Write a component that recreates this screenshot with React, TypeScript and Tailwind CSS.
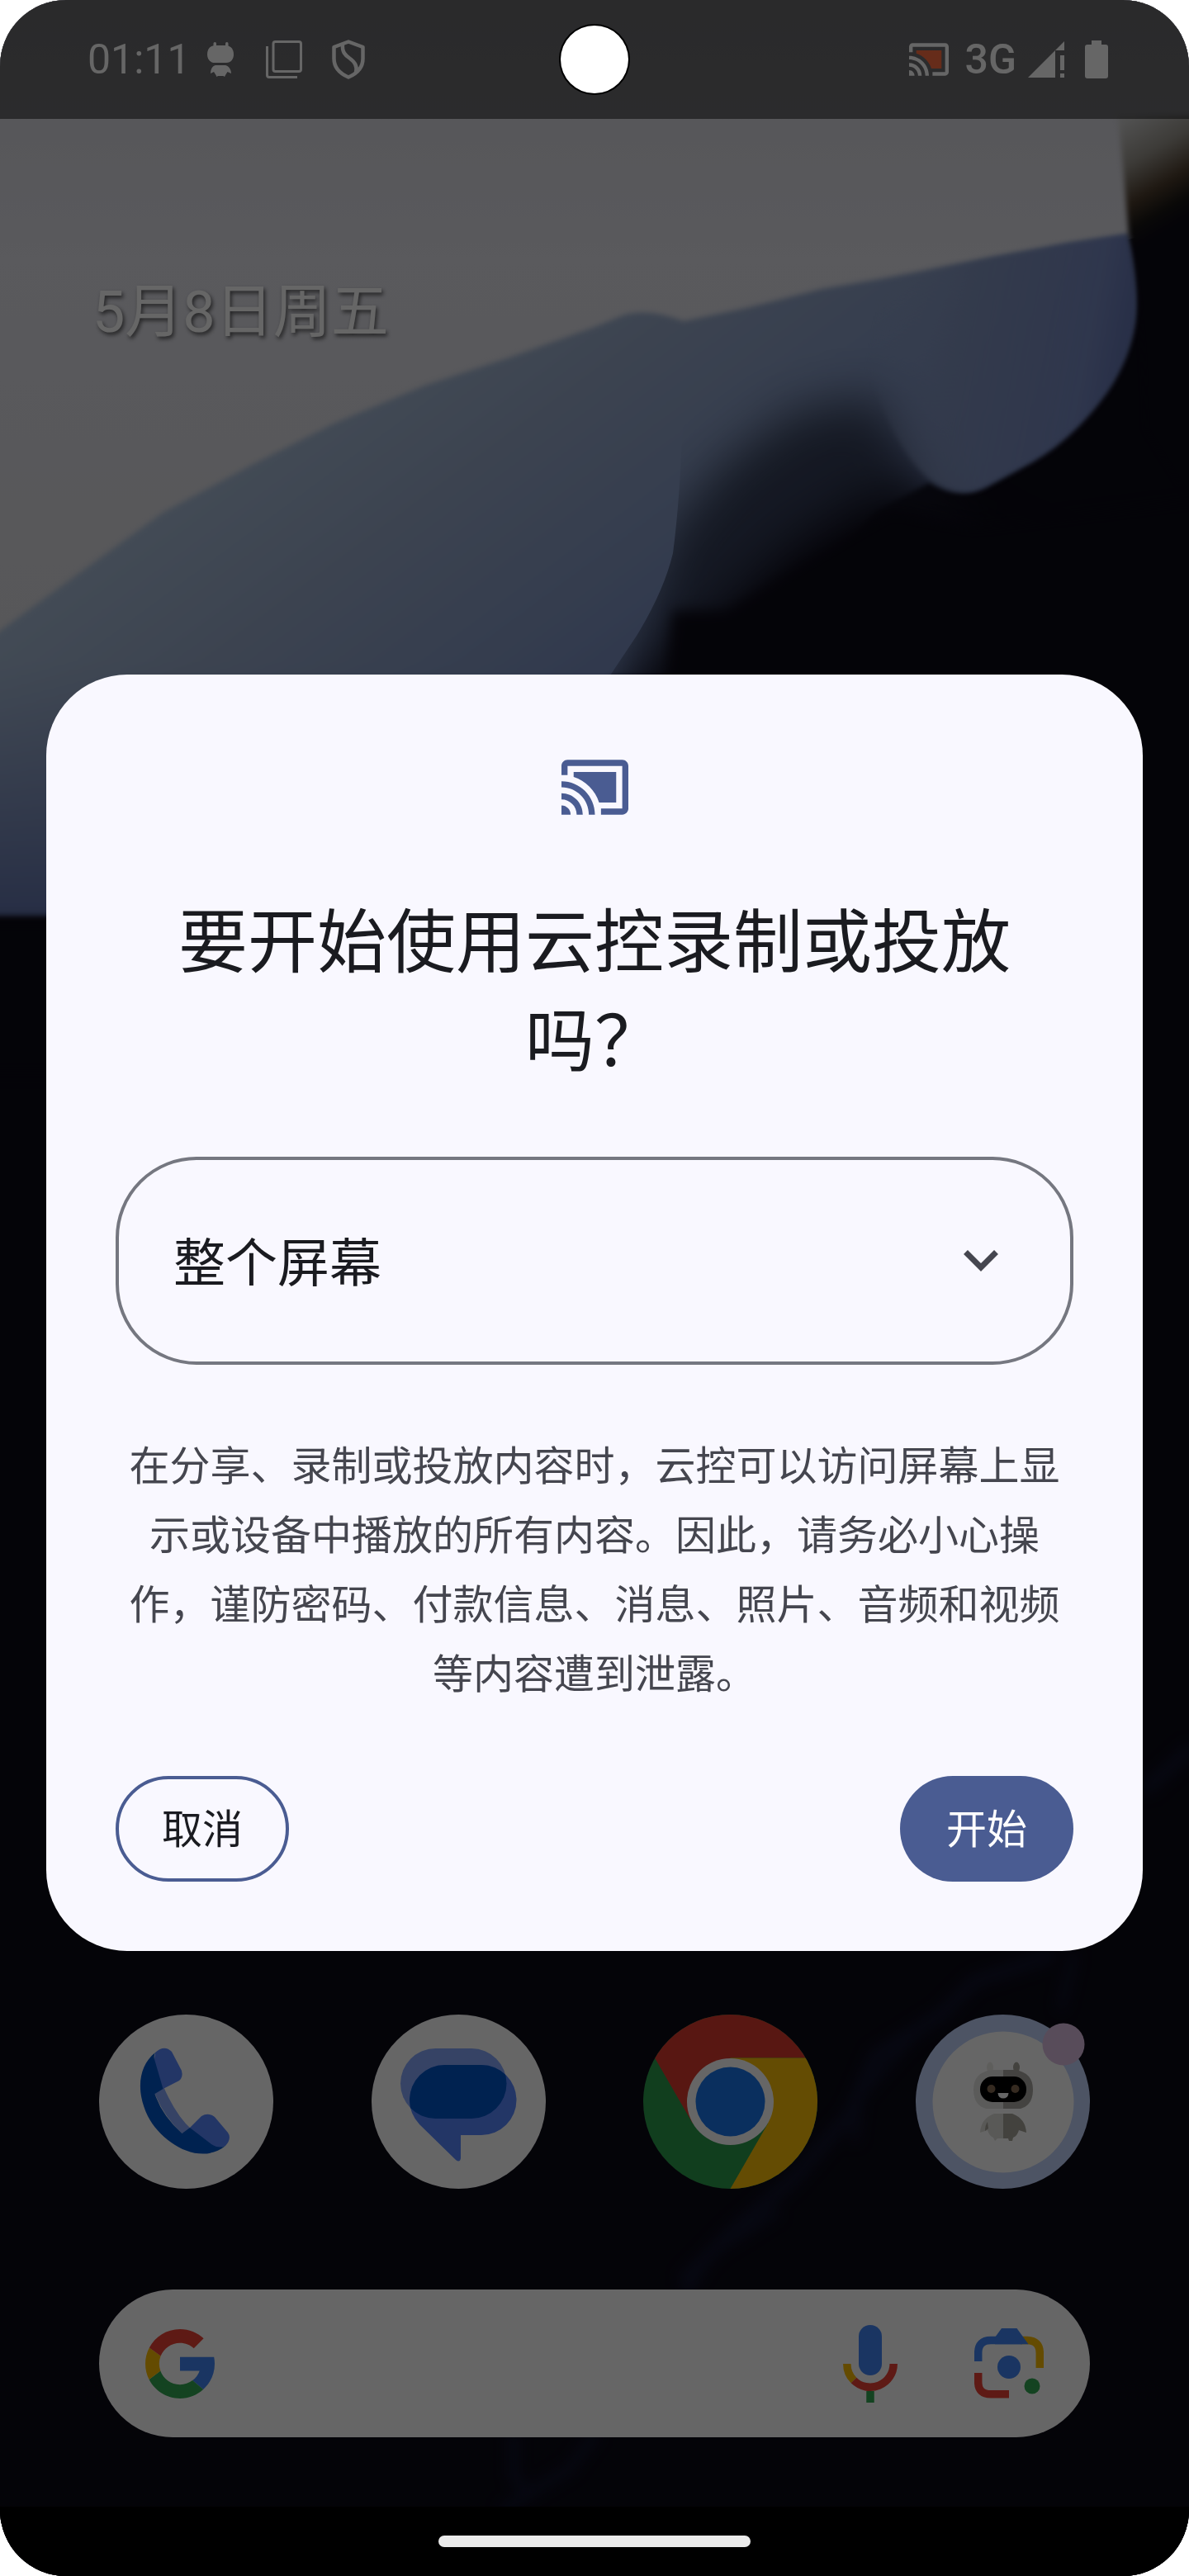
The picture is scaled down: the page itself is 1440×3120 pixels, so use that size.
import { useState } from "react";

const Wallpaper = () => {
  return (
    <svg
      className="absolute inset-0 h-full w-full"
      viewBox="0 0 1440 3120"
      preserveAspectRatio="none"
      aria-hidden="true"
    >
      <defs>
        <linearGradient id="paper" x1="0" y1="0" x2="0" y2="1">
          <stop offset="0" stopColor="#d3d3da" />
          <stop offset="0.35" stopColor="#e0e0e8" />
          <stop offset="1" stopColor="#d8d8dc" />
        </linearGradient>
        <linearGradient id="petal" gradientUnits="userSpaceOnUse" x1="420" y1="440" x2="760" y2="900">
          <stop offset="0" stopColor="#a8bcd6" />
          <stop offset="0.35" stopColor="#96a8c8" />
          <stop offset="0.7" stopColor="#8398c4" />
          <stop offset="1" stopColor="#7084bc" />
        </linearGradient>
        <linearGradient id="petalRight" gradientUnits="userSpaceOnUse" x1="1050" y1="440" x2="1370" y2="500">
          <stop offset="0" stopColor="#8ea0c8" stopOpacity="0" />
          <stop offset="0.35" stopColor="#8092bc" stopOpacity="0.85" />
          <stop offset="0.8" stopColor="#7688c0" />
          <stop offset="1" stopColor="#5c6eac" />
        </linearGradient>
        <linearGradient id="petalLow" gradientUnits="userSpaceOnUse" x1="0" y1="800" x2="0" y2="1110">
          <stop offset="0" stopColor="#7c90be" stopOpacity="0" />
          <stop offset="1" stopColor="#6274ac" />
        </linearGradient>
        <linearGradient id="edge" gradientUnits="userSpaceOnUse" x1="1355" y1="150" x2="1425" y2="270">
          <stop offset="0" stopColor="#cacaca" />
          <stop offset="0.35" stopColor="#98948c" />
          <stop offset="0.65" stopColor="#4c3c2c" />
          <stop offset="0.85" stopColor="#181614" />
          <stop offset="1" stopColor="#0c0a16" />
        </linearGradient>
        <clipPath id="foldArea">
          <path d="M828 300Q832 540 815 670Q804 716 771 770L735 824H1440V300Z" />
        </clipPath>
        <filter id="soft2" x="-10%" y="-10%" width="120%" height="120%" colorInterpolationFilters="sRGB">
          <feGaussianBlur stdDeviation="3" />
        </filter>
        <filter id="soft8" x="-20%" y="-20%" width="140%" height="140%" colorInterpolationFilters="sRGB">
          <feGaussianBlur stdDeviation="8" />
        </filter>
        <filter id="soft30" x="-40%" y="-40%" width="180%" height="180%" colorInterpolationFilters="sRGB">
          <feGaussianBlur stdDeviation="30" />
        </filter>
      </defs>

      <rect width="1440" height="3120" fill="#0c0a16" />
      <path d="M0 0H1440V270L1367 290L720 500L0 900Z" fill="url(#paper)" />

      {/* Blue petal */}
      <g filter="url(#soft2)">
        <path
          d="M-20 780L0 764L92 697L197 621L303 564L404 513L514 467L620 432L720 396L747 385Q780 370 828 389L904 373L995 350L1110 330L1202 312L1294 295L1367 284Q1380 330 1375 380Q1370 430 1340 474Q1300 530 1249 559L1194 589Q1162 606 1125 585L1060 620L940 760L860 820H739L600 1110H-20Z"
          fill="url(#petal)"
        />
        <path d="M-20 800H745L600 1110H-20Z" fill="url(#petalLow)" />
      </g>
      <path d="M-40 1116H700V1300H-40Z" fill="#0c0a16" filter="url(#soft8)" />

      {/* Dark fold under the petal */}
      <g clipPath="url(#foldArea)">
        <path
          d="M1160 640L1110 560L1060 480L960 500L880 560L810 640L740 900H1160Z"
          fill="#1c2234"
          opacity="0.75"
          filter="url(#soft30)"
        />
        <path
          d="M1200 660L1110 600L1060 598L960 660L890 730L830 780L700 900H1400L1300 700Z"
          fill="#0c0a16"
          filter="url(#soft30)"
        />
        <path d="M815 740L800 900H1500V600L1180 640L1080 620L960 690L880 740Z" fill="#0c0a16" filter="url(#soft8)" />
      </g>

      {/* Lit tip on the right */}
      <path
        d="M1040 344L1110 330L1202 312L1294 295L1367 284Q1380 330 1375 380Q1370 430 1340 474Q1300 530 1249 559L1194 589Q1162 606 1125 580Q1080 540 1050 440Z"
        fill="url(#petalRight)"
        filter="url(#soft2)"
      />

      {/* Burnt right edge */}
      <path d="M1354 140H1450V620L1388 520Q1384 360 1367 284L1360 200Z" fill="url(#edge)" filter="url(#soft2)" />

      {/* Faint veins at the bottom */}
      <g fill="none" stroke="#11152e" strokeLinecap="round" strokeLinejoin="round" filter="url(#soft8)">
        <path d="M1440 2120L1390 2165M1270 2370L1180 2400L1140 2440L1060 2490L1030 2560L960 2640L890 2700L830 2760" strokeWidth="16" />
        <path d="M1300 2370L1285 2430M1120 2450L1040 2540L1035 2590M940 2680L860 2730L830 2780" strokeWidth="10" />
        <path d="M622 2950V3000L640 3020L690 2990L720 2950M640 3020L610 3040" strokeWidth="12" />
      </g>
    </svg>
  );
};

const CastIcon = ({ className, fill }: { className: string; fill: string }) => {
  return (
    <svg className={className} viewBox="0 0 22 18" fill="currentColor" aria-hidden="true">
      <path d="M20 0H2C0.900 0 0 0.900 0 2V5H2V2H20V16H13V18H20C21.100 18 22 17.100 22 16V2C22 0.900 21.100 0 20 0Z" />
      <path d="M0 15V18H3C3 16.340 1.660 15 0 15Z" />
      <path d="M0 11V13C2.760 13 5 15.240 5 18H7C7 14.130 3.870 11 0 11Z" />
      <path d="M0 7V9C4.970 9 9 13.030 9 18H11C11 11.920 6.070 7 0 7Z" />
      <path d="M4 4V5.630C7.960 6.910 11.090 10.040 12.370 14H18V4Z" fill={fill} />
    </svg>
  );
};

const StatusBar = () => {
  return (
    <header className="relative flex h-36 items-center justify-between bg-black/50 pr-[98px] pl-[106px] text-white">
      <div className="flex items-center">
        <span className="text-[50px]">01:11</span>
        <svg className="ml-5 h-[42px] w-8" viewBox="0 0 32 42" fill="currentColor" aria-hidden="true">
          <rect x="7.500" y="0" width="3.500" height="9" rx="1.700" />
          <rect x="22" y="0" width="3.500" height="9" rx="1.700" />
          <path d="M10 4H22C29 4 32 9 32 15C32 20 29 25 23 25H9C3 25 0 20 0 15C0 9 3 4 10 4Z" />
          <path d="M10 28H22C26 29 29 33 29 38L24.500 36L22 40L21 42L19.500 41H13L11.500 42L10.500 40L8 36L4 38C4 33 6 29 10 28Z" />
        </svg>
        <svg className="ml-[39px] h-[46px] w-11" viewBox="0 0 44 46" fill="none" stroke="currentColor" strokeWidth="3" aria-hidden="true">
          <rect x="9" y="1.500" width="33.500" height="36" rx="2.500" />
          <path d="M1.500 7V42Q1.500 44.500 4 44.500H38" />
        </svg>
        <svg className="ml-9 h-12 w-10" viewBox="0 0 40 48" fill="none" stroke="currentColor" strokeWidth="4.500" strokeLinejoin="round" aria-hidden="true">
          <path d="M20 2.500L37.500 9V23Q37.500 38 20 45.500Q2.500 38 2.500 23V9Z" />
          <path d="M13 5C12 15 16 19 22 23C29 28 31 33 29 40" />
        </svg>
      </div>
      <div className="flex items-center">
        <CastIcon className="h-10 w-12" fill="#ff6e41" />
        <span className="ml-5 text-[50px] font-medium">3G</span>
        <svg className="ml-[14px] h-11 w-11" viewBox="0 0 44 44" fill="currentColor" aria-hidden="true">
          <path d="M0 44L33 11V44Z" />
          <path d="M33 11L44 0V11Z" />
          <rect x="39" y="17" width="5" height="18" />
          <rect x="39" y="39" width="5" height="5" />
        </svg>
        <svg className="ml-[25px] h-[46px] w-7" viewBox="0 0 28 46" fill="currentColor" aria-hidden="true">
          <path d="M8 0H20V5H25Q28 5 28 8V43Q28 46 25 46H3Q0 46 0 43V8Q0 5 3 5H8Z" />
        </svg>
      </div>
    </header>
  );
};

const PhoneIcon = () => {
  return (
    <svg viewBox="0 0 211 211" aria-hidden="true">
      <circle cx="105.500" cy="105.500" r="105.500" fill="#fff" />
      <path d="M77 85L67.500 95.500Q78 123 100.500 144L113 140Q93 123 77 85Z" fill="#87a8fc" />
      <path d="M68 46Q79 36 88 45L100 68Q102 76 97 80L77.500 90L66 60Z" fill="#5887ff" />
      <path d="M110 137L124 123Q132 118 140 124L156 143Q161 150 153 159L140 164Z" fill="#5887ff" />
      <path
        d="M68 46C48 62 44 92 59 123C76 156 122 184 153 159Q145 163 136 157L110 137L100.500 144Q76 122 67.500 96L77.500 90L67 54Q66 49 68 46Z"
        fill="#0055c8"
      />
    </svg>
  );
};

const MessagesIcon = () => {
  return (
    <svg viewBox="0 0 211 211" aria-hidden="true">
      <defs>
        <clipPath id="bubble">
          <rect x="35" y="41" width="128.500" height="85" rx="42.500" />
        </clipPath>
      </defs>
      <circle cx="105.500" cy="105.500" r="105.500" fill="#fff" />
      <rect x="35" y="41" width="128.500" height="85" rx="42.500" fill="#87a8fc" />
      <path
        d="M88.500 61H133A42.500 42.500 0 0 1 133 146H108V174Q107 180 102 176L58 133Q46 120 46 103.500A42.500 42.500 0 0 1 88.500 61Z"
        fill="#5887ff"
      />
      <rect x="46" y="61" width="129.500" height="85" rx="42.500" fill="#0055c8" clipPath="url(#bubble)" />
    </svg>
  );
};

const ChromeIcon = () => {
  return (
    <svg viewBox="0 0 211 211" aria-hidden="true">
      <defs>
        <clipPath id="disc">
          <circle cx="105.500" cy="105.500" r="105.500" />
        </clipPath>
      </defs>
      <g clipPath="url(#disc)">
        <rect width="211" height="211" fill="#2c9c4c" />
        <path d="M0 0H211V52.500H105.500L60 132L14 52.500L0 30Z" fill="#dc3a2e" />
        <path d="M105.500 52.500H211V211H105.500L151 132Z" fill="#fabe08" />
      </g>
      <circle cx="105.500" cy="105.500" r="52.500" fill="#fff" />
      <circle cx="105.500" cy="105.500" r="42" fill="#1a76ec" />
    </svg>
  );
};

const RobotIcon = () => {
  return (
    <svg viewBox="0 0 211 211" aria-hidden="true">
      <circle cx="105.500" cy="105.500" r="105.500" fill="#c0d2fa" />
      <circle cx="106" cy="106" r="85.500" fill="#fff" />
      <ellipse cx="90" cy="64" rx="4" ry="6.500" fill="#eceae6" />
      <ellipse cx="122" cy="64" rx="4" ry="6.500" fill="#a8a69c" />
      <path d="M106 67H92Q70 70 70 91Q70 110 85 114H106Z" fill="#e4e4e2" />
      <path d="M106 67H120Q142 70 142 91Q142 110 127 114H106Z" fill="#aaa8a2" />
      <rect x="78" y="75" width="56" height="31" rx="15" fill="#000" />
      <circle cx="91.500" cy="90" r="5" fill="#866a52" />
      <circle cx="120.500" cy="90" r="5" fill="#866a52" />
      <path d="M99.500 95H112.500Q112 101.500 106 101.500Q100 101.500 99.500 95Z" fill="#fff" />
      <path d="M106 120H95Q79 126 78 143L87 140Q89 147 94 149L96 153L99 150H106Z" fill="#dededa" />
      <path d="M87 130L88 138L84 141Q84 134 87 130Z" fill="#a8a69c" />
      <path d="M106 120H117Q133 126 134 143L125 140Q123 147 118 149L117 153H113L112 150H106Z" fill="#a8a69c" />
      <circle cx="179" cy="36" r="25.500" fill="#dcbee0" />
    </svg>
  );
};

const apps = [
  { name: "电话", icon: <PhoneIcon /> },
  { name: "信息", icon: <MessagesIcon /> },
  { name: "Chrome", icon: <ChromeIcon /> },
  { name: "云控", icon: <RobotIcon /> },
];

const Dock = () => {
  return (
    <nav className="relative flex justify-between px-[120px]">
      {apps.map((app) => (
        <button key={app.name} type="button" aria-label={app.name} className="h-[211px] w-[211px] rounded-full">
          {app.icon}
        </button>
      ))}
    </nav>
  );
};

const SearchBar = () => {
  return (
    <div className="relative mx-[120px] mt-[122px] mb-[84px] flex h-[179px] items-center rounded-full bg-white px-14">
      <svg className="h-[84px] w-[84px]" viewBox="4 4 40 40" aria-hidden="true">
        <path fill="#4285f4" d="M43.611 20.083H24V28H35.303A12.040 12.040 0 0 1 31.216 33.570L37.405 38.808C41.380 35.200 44 30 44 24C44 22.659 43.862 21.350 43.611 20.083Z" />
        <path fill="#34a853" d="M24 44C29.166 44 33.860 42.023 37.409 38.808L31.219 33.570A11.910 11.910 0 0 1 24 36C18.798 36 14.381 32.683 12.717 28.054L6.195 33.079C9.505 39.556 16.227 44 24 44Z" />
        <path fill="#fbbc04" d="M6.306 14.691A20 20 0 0 0 6.195 33.079L12.760 28.100A12 12 0 0 1 12.877 19.510Z" />
        <path fill="#ea4335" d="M6.306 14.691L12.877 19.510C14.655 15.108 18.961 12 24 12C27.059 12 29.842 13.154 31.961 15.039L37.618 9.382C34.046 6.053 29.268 4 24 4C16.318 4 9.656 8.337 6.306 14.691Z" />
      </svg>
      <input type="search" aria-label="搜索" className="h-full min-w-0 flex-1 bg-transparent px-6 text-[50px] outline-none" />
      <button type="button" aria-label="语音搜索">
        <svg className="h-[94px] w-[66px]" viewBox="0 0 66 94" fill="none" strokeWidth="9.500" aria-hidden="true">
          <rect x="19" y="0" width="28" height="61" rx="14" fill="#4285f4" />
          <path d="M4.800 47A28.200 28.200 0 0 0 13 67" stroke="#fbbc04" />
          <path d="M13 67A28.200 28.200 0 0 0 61.200 47" stroke="#ea4335" />
          <path d="M33 80V94" stroke="#34a853" />
        </svg>
      </button>
      <button type="button" aria-label="智能镜头" className="ml-[93px]">
        <svg className="h-[85px] w-[84px]" viewBox="0 0 84 85" fill="none" strokeWidth="9.500" aria-hidden="true">
          <path d="M56 14.500H64Q79.300 15 79.300 30V48" stroke="#fbbc04" />
          <path d="M4.700 40V30Q4.700 14.500 20 14.500H58" stroke="#4285f4" />
          <path d="M25 11L33 0H51.500L65.500 19.200H25Z" fill="#4285f4" />
          <path d="M4.700 54V65Q4.700 79.800 20 79.800H42" stroke="#ea4335" />
          <circle cx="42" cy="47" r="14" fill="#4285f4" />
          <circle cx="70" cy="70" r="9.500" fill="#34a853" />
        </svg>
      </button>
    </div>
  );
};

const ShareDialog = () => {
  const [scope, setScope] = useState("screen");

  return (
    <section
      role="dialog"
      aria-modal="true"
      aria-labelledby="dialog-title"
      className="flex w-full flex-col items-center rounded-[98px] bg-[#f9f8ff] px-[84px] pt-[103px] pb-[84px]"
    >
      <CastIcon className="h-[67px] w-[81px] text-[#4a5c92]" fill="currentColor" />
      <h1 id="dialog-title" className="mt-24 text-center text-[84px] leading-[120px] text-[#1a1b20]">
        要开始使用云控录制或投放吗？
      </h1>

      <div className="relative mt-[78px] w-full">
        <select
          aria-label="共享范围"
          value={scope}
          onChange={(e) => setScope(e.target.value)}
          className="h-[252px] w-full appearance-none rounded-[98px] border-4 border-[#757780] bg-transparent px-[66px] pt-2 text-[63px] text-[#1a1b20]"
        >
          <option value="screen">整个屏幕</option>
          <option value="app">单个应用</option>
        </select>
        <svg
          className="pointer-events-none absolute top-1/2 right-[91px] h-[26px] w-[42px] -translate-y-1/2"
          viewBox="0 0 42 26"
          fill="none"
          stroke="#45464f"
          strokeWidth="7"
          aria-hidden="true"
        >
          <path d="M2.500 2.500L21 21L39.500 2.500" />
        </svg>
      </div>

      <p className="mt-[82px] text-center text-[49px] leading-[84px] text-[#45464f]">
        在分享、录制或投放内容时，云控可以访问屏幕上显示或设备中播放的所有内容。因此，请务必小心操作，谨防密码、付款信息、消息、照片、音频和视频等内容遭到泄露。
      </p>

      <div className="mt-20 flex w-full justify-between text-[49px]">
        <button type="button" className="h-32 w-[210px] rounded-[64px] border-4 border-[#4a5c92] pt-1 text-[#1a1b20]">
          取消
        </button>
        <button type="button" className="h-32 w-[210px] rounded-[64px] bg-[#4a5c92] pt-1 text-white">
          开始
        </button>
      </div>
    </section>
  );
};

const App = () => {
  return (
    <div className="min-h-screen bg-white font-[Roboto,'Noto_Sans_CJK_SC',sans-serif]" lang="zh-CN">
      <main className="relative flex min-h-screen flex-col overflow-hidden rounded-[80px] bg-black">
        <Wallpaper />
        <StatusBar />
        <time
          dateTime="05-08"
          className="relative mt-[184px] pl-28 text-[70px] leading-[100px] text-white [text-shadow:2px_3px_5px_rgb(0_0_0/0.6)]"
        >
          5月8日周五
        </time>
        <div className="flex-1" />
        <Dock />
        <SearchBar />
        <div className="relative h-[84px] bg-black" />

        {/* Scrim and dialog */}
        <div className="absolute inset-0 flex items-center bg-black/60 px-14 pt-36 pb-[84px]">
          <ShareDialog />
        </div>

        {/* Camera cutout and gesture handle */}
        <div className="absolute top-[29px] left-1/2 flex h-[86px] w-[86px] -translate-x-1/2 items-center justify-center rounded-full bg-black">
          <div className="h-[82px] w-[82px] rounded-full bg-white" />
        </div>
        <div className="absolute bottom-[35px] left-1/2 h-[14px] w-[378px] -translate-x-1/2 rounded-full bg-[#ebebeb]" />
      </main>
    </div>
  );
};

export default App;
